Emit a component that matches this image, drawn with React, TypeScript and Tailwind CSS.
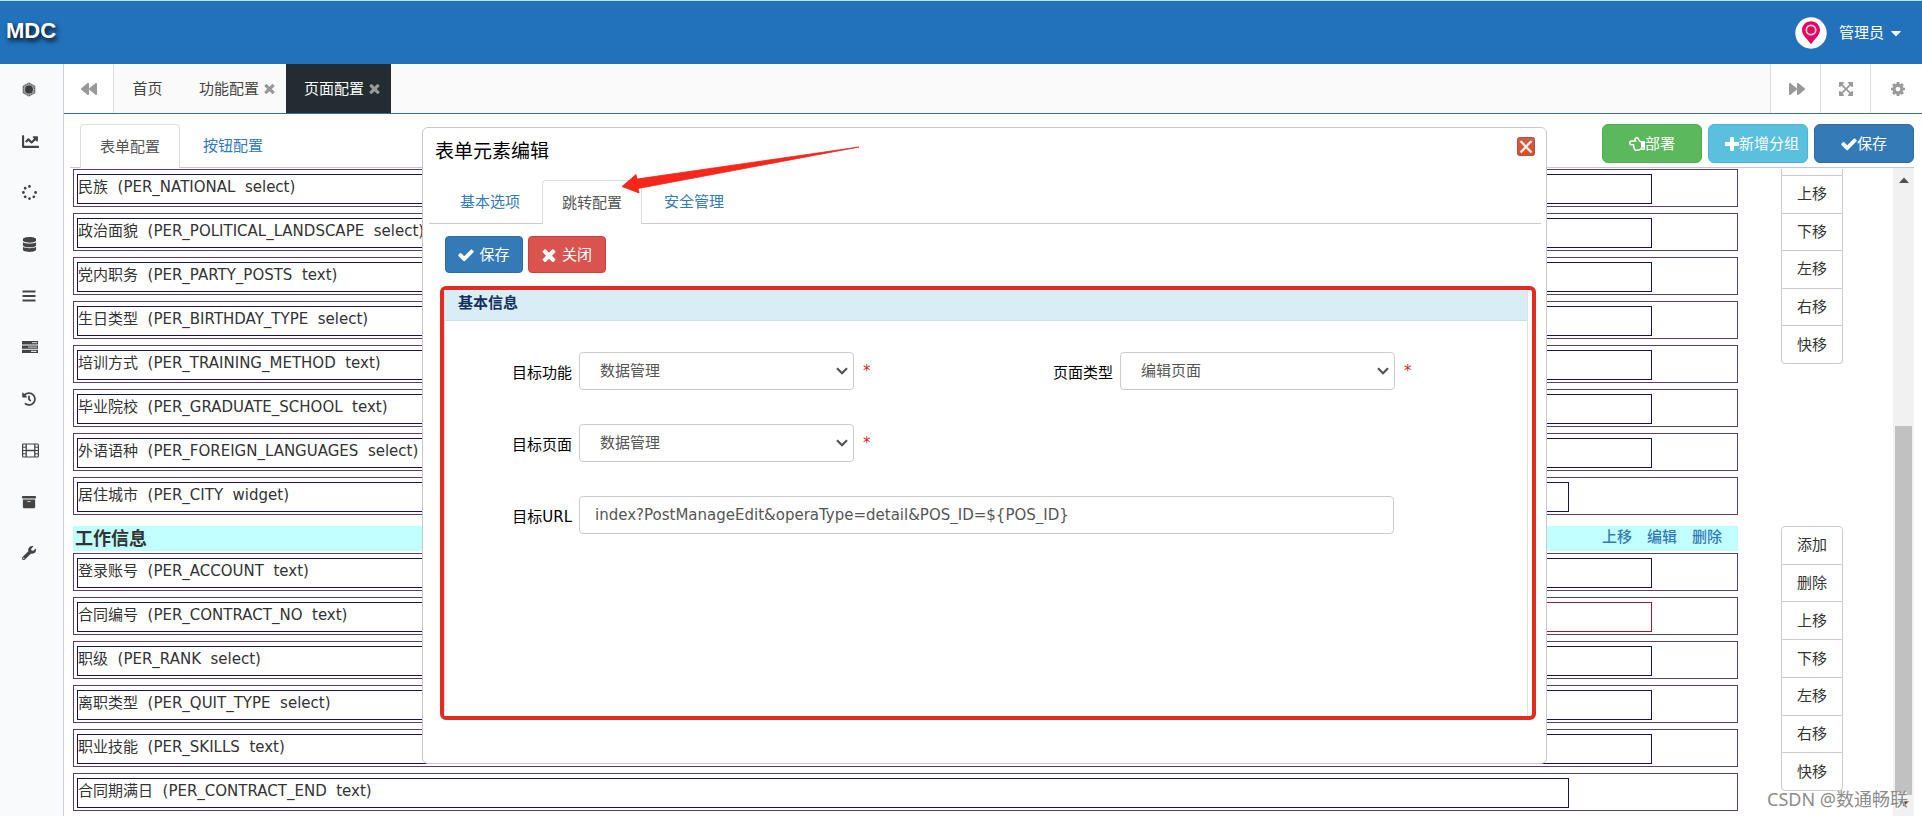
import type { ReactNode } from "react";
import {
  FaArchive,
  FaBackward,
  FaCaretDown,
  FaChartLine,
  FaDatabase,
  FaExpandArrowsAlt,
  FaForward,
  FaHistory,
  FaRegHandPointLeft,
  FaSpinner,
  FaWrench,
} from "react-icons/fa";

type IconProps = { className?: string };

function TimesIcon({ className }: IconProps) {
  return (
    <svg viewBox="250 250 1292 1292" fill="currentColor" className={className} aria-hidden="true">
      <path d="M1490 1322q0 40-28 68l-136 136q-28 28-68 28t-68-28l-294-294-294 294q-28 28-68 28t-68-28l-136-136q-28-28-28-68t28-68l294-294-294-294q-28-28-28-68t28-68l136-136q28-28 68-28t68 28l294 294 294-294q28-28 68-28t68 28l136 136q28 28 28 68t-28 68l-294 294 294 294q28 28 28 68z" />
    </svg>
  );
}

function CheckIcon({ className }: IconProps) {
  return (
    <svg viewBox="100 200 1592 1392" fill="currentColor" className={className} aria-hidden="true">
      <path d="M1671 566q0 40-28 68l-724 724-136 136q-28 28-68 28t-68-28l-136-136-362-362q-28-28-28-68t28-68l136-136q28-28 68-28t68 28l294 295 656-657q28-28 68-28t68 28l136 136q28 28 28 68z" />
    </svg>
  );
}

function PlusIcon({ className }: IconProps) {
  return (
    <svg viewBox="192 128 1408 1408" fill="currentColor" className={className} aria-hidden="true">
      <path d="M1600 736v192q0 40-28 68t-68 28h-416v416q0 40-28 68t-68 28h-192q-40 0-68-28t-28-68v-416h-416q-40 0-68-28t-28-68v-192q0-40 28-68t68-28h416v-416q0-40 28-68t68-28h192q40 0 68 28t28 68v416h416q40 0 68 28t28 68z" />
    </svg>
  );
}

function CogIcon({ className }: IconProps) {
  return (
    <svg viewBox="128 128 1536 1536" fill="currentColor" className={className} aria-hidden="true">
      <path d="M1152 896q0-106-75-181t-181-75-181 75-75 181 75 181 181 75 181-75 75-181zm512-109v222q0 12-8 23t-20 13l-185 28q-19 54-39 91 35 50 107 138 10 12 10 25t-9 23q-27 37-99 108t-94 71q-12 0-26-9l-138-108q-44 23-91 38-16 136-29 186-7 28-36 28h-222q-14 0-24.500-8.500t-11.500-21.500l-28-184q-49-16-90-37l-141 107q-10 9-25 9-14 0-25-11-126-114-165-168-7-10-7-23 0-12 8-23 15-21 51-66.500t54-70.500q-27-50-41-99l-183-27q-13-2-21-12.500t-8-23.500v-222q0-12 8-23t19-13l186-28q14-46 39-92-40-57-107-138-10-12-10-24 0-10 9-23 26-36 98.500-107.500t94.500-71.500q13 0 26 10l138 107q44-23 91-38 16-136 29-186 7-28 36-28h222q14 0 24.500 8.500t11.500 21.500l28 184q49 16 90 37l142-107q9-9 24-9 13 0 25 10 129 119 165 170 7 8 7 22 0 12-8 23-15 21-51 66.500t-54 70.500q26 50 41 98l183 28q13 2 21 12.500t8 23.500z" />
    </svg>
  );
}

function HexIcon() {
  return (
    <svg viewBox="0 0 14 15" className="h-[15px] w-[14px]" aria-hidden="true">
      <path d="M7 0.300l6.500 3.500v7.400L7 14.700 0.500 11.200V3.800z" fill="#a0a3a6" />
      <path d="M7 1.300l5.500 3.100v6.200L7 13.700 1.500 10.600V4.400z" fill="none" stroke="#5c5c5c" strokeDasharray="1.500 1" />
      <circle cx="7" cy="7.500" r="3.900" fill="#3c3c3c" />
    </svg>
  );
}

function BarsIcon() {
  return (
    <svg viewBox="0 0 14 12" className="h-3 w-[14px]" fill="currentColor" aria-hidden="true">
      <rect x="0.500" y="0.500" width="13" height="2" />
      <rect x="0.500" y="5" width="13" height="2" />
      <rect x="0.500" y="9.500" width="13" height="2" />
    </svg>
  );
}

function TasksIcon() {
  return (
    <svg viewBox="0 0 16 12" className="h-3 w-4" aria-hidden="true">
      <path d="M0 0h16v3.400H0zM0 4.400h16v3.400H0zM0 8.800h16V12H0z" fill="#444" />
      <path d="M10 1.200h5v1h-5z" fill="#ddd" />
      <path d="M6 5.400h9v1.400H6z" fill="#aaa" />
      <path d="M9 9.800h5.500v1.200H9z" fill="#ddd" />
    </svg>
  );
}

function FilmIcon() {
  return (
    <svg viewBox="0 0 17 15" className="h-[15px] w-[17px]" fill="none" stroke="#444" aria-hidden="true">
      <rect x="0.600" y="1" width="15.800" height="13" rx="1" strokeWidth="1.200" />
      <path d="M4.200 1v13M12.800 1v13M4.200 7.500h8.600" strokeWidth="1.300" />
      <path d="M0.600 4.200h3.600M0.600 7.500h3.600M0.600 10.800h3.600M12.800 4.200h3.600M12.800 7.500h3.600M12.800 10.800h3.600" strokeWidth="1" />
    </svg>
  );
}

function PinLogo() {
  return (
    <svg viewBox="0 0 32 32" className="size-8" aria-hidden="true">
      <circle cx="16" cy="16" r="15.700" fill="#fff" />
      <path d="M16 4.200c-5 0-9 4-9 8.800 0 5.200 5 8.500 9 14.200 4-5.700 9-9 9-14.200 0-4.800-4-8.800-9-8.800z" fill="#e8045e" />
      <circle cx="16" cy="13" r="4.700" fill="#e8045e" stroke="#fbd3e2" strokeWidth="1.700" />
    </svg>
  );
}

function CloseBadge() {
  return (
    <svg viewBox="0 0 18 19" className="h-[19px] w-[18px]" aria-hidden="true">
      <defs>
        <linearGradient id="closeFill" x1="0" y1="0" x2="0" y2="1">
          <stop offset="0" stopColor="#c9604c" />
          <stop offset="1" stopColor="#dd4f22" />
        </linearGradient>
      </defs>
      <rect x="0.500" y="0.500" width="17" height="18" rx="2" fill="url(#closeFill)" stroke="#b5503c" />
      <path d="M3.500 4l11 11.500M14.500 4l-11 11.500" stroke="#f3ece6" strokeWidth="2.400" />
    </svg>
  );
}

const sideItems: { label: string; icon: ReactNode }[] = [
  { label: "模块", icon: <HexIcon /> },
  { label: "统计", icon: <FaChartLine className="size-[17px]" /> },
  { label: "加载", icon: <FaSpinner className="size-[15px]" /> },
  { label: "数据", icon: <FaDatabase className="size-[15px]" /> },
  { label: "列表", icon: <BarsIcon /> },
  { label: "任务", icon: <TasksIcon /> },
  { label: "历史", icon: <FaHistory className="size-[14px]" /> },
  { label: "媒体", icon: <FilmIcon /> },
  { label: "归档", icon: <FaArchive className="size-[14px]" /> },
  { label: "工具", icon: <FaWrench className="size-[14px]" /> },
];

type Field = { label: string; code: string; kind: string; short?: boolean; invalid?: boolean };

const personalFields: Field[] = [
  { label: "民族", code: "PER_NATIONAL", kind: "select" },
  { label: "政治面貌", code: "PER_POLITICAL_LANDSCAPE", kind: "select" },
  { label: "党内职务", code: "PER_PARTY_POSTS", kind: "text" },
  { label: "生日类型", code: "PER_BIRTHDAY_TYPE", kind: "select" },
  { label: "培训方式", code: "PER_TRAINING_METHOD", kind: "text" },
  { label: "毕业院校", code: "PER_GRADUATE_SCHOOL", kind: "text" },
  { label: "外语语种", code: "PER_FOREIGN_LANGUAGES", kind: "select" },
  { label: "居住城市", code: "PER_CITY", kind: "widget", short: true },
];

const workFields: Field[] = [
  { label: "登录账号", code: "PER_ACCOUNT", kind: "text" },
  { label: "合同编号", code: "PER_CONTRACT_NO", kind: "text", invalid: true },
  { label: "职级", code: "PER_RANK", kind: "select" },
  { label: "离职类型", code: "PER_QUIT_TYPE", kind: "select" },
  { label: "职业技能", code: "PER_SKILLS", kind: "text" },
  { label: "合同期满日", code: "PER_CONTRACT_END", kind: "text", short: true },
];

function FieldRow({ field }: { field: Field }) {
  return (
    <div className="h-[38px] border border-[#5b3f68] pt-1 pl-[3px]">
      <div className={field.short ? "mr-[168px] flex" : "mr-[85px] flex"}>
        <div className="h-[30px] flex-1 overflow-hidden border border-[#17125a] leading-[25px] whitespace-pre">
          {`${field.label}  (${field.code}  ${field.kind})`}
        </div>
        {field.invalid && <div className="h-[30px] w-1/4 border border-[#8c2230]" />}
      </div>
    </div>
  );
}

function ActionStack({ items, continued }: { items: string[]; continued?: boolean }) {
  return (
    <div
      className={
        continued
          ? "flex h-[195px] w-[62px] flex-col rounded-b border border-t-0 border-[#ccc] pt-[6px]"
          : "flex h-[265px] w-[62px] flex-col rounded border border-[#ccc]"
      }
    >
      {items.map((item, i) => (
        <button
          key={item}
          type="button"
          className={
            i > 0 || continued
              ? "flex-1 border-t border-[#ccc] text-[#333]"
              : "flex-1 text-[#333]"
          }
        >
          {item}
        </button>
      ))}
    </div>
  );
}

function SelectField({ id, label, value }: { id: string; label: string; value: string }) {
  return (
    <div className="flex items-center">
      <label htmlFor={id} className="w-[134px] pt-[3px] pr-[7px] text-right text-black">
        {label}
      </label>
      <div className="relative w-[275px]">
        <select
          id={id}
          defaultValue={value}
          className="h-[38px] w-full appearance-none rounded border border-[#ccc] bg-white pl-5 text-[#555]"
        >
          <option>{value}</option>
        </select>
        <svg
          viewBox="0 0 12 8"
          className="pointer-events-none absolute top-[15px] right-[6px] h-2 w-3"
          fill="none"
          stroke="#555"
          strokeWidth="2.200"
          aria-hidden="true"
        >
          <path d="M1 1.200l5 5 5-5" />
        </svg>
      </div>
      <span className="pl-[9px] text-[#d02b2b]">*</span>
    </div>
  );
}

function EditDialog() {
  return (
    <section
      role="dialog"
      aria-label="表单元素编辑"
      className="absolute top-[13px] right-[375px] left-[358px] z-10 h-[637px] rounded-md border border-[#c6c8cc] bg-white"
    >
      <div className="flex h-[52px] items-start justify-between pt-[9px] pr-[11px] pl-3">
        <h2 className="text-[19px] leading-7 text-black">表单元素编辑</h2>
        <button type="button" aria-label="关闭窗口">
          <CloseBadge />
        </button>
      </div>
      <div className="mr-[5px] ml-[6px] flex h-11 gap-[2px] border-b border-[#ccc] pl-[11px] text-[#337ab7]">
        <button type="button" className="w-[100px]">基本选项</button>
        <button
          type="button"
          className="-mb-px w-[100px] rounded-t border border-b-0 border-[#ddd] bg-white text-[#555]"
        >
          跳转配置
        </button>
        <button type="button" className="w-[100px]">安全管理</button>
      </div>
      <div className="flex gap-[5px] pt-3 pl-[22px] text-white">
        <button
          type="button"
          className="flex h-[37px] w-[78px] items-center justify-center gap-[5px] rounded border border-[#2e6da4] bg-[#337ab7]"
        >
          <CheckIcon className="h-[14px] w-4" />
          保存
        </button>
        <button
          type="button"
          className="flex h-[37px] w-[78px] items-center justify-center gap-[6px] rounded border border-[#d43f3a] bg-[#d9534f]"
        >
          <TimesIcon className="size-[14px]" />
          关闭
        </button>
      </div>
      <div className="mt-[13px] mr-[10px] ml-[17px] h-[434px] rounded-md border-4 border-[#e32b22] pr-1">
        <div className="flex h-full flex-col border-x border-[#dde3e6]">
          <h3 className="h-[31px] border-b border-[#c5e3ea] bg-[#d9edf7] pl-[13px] leading-[27px] font-bold text-[#14305c]">
            基本信息
          </h3>
          <form className="grid grid-cols-2 gap-y-[34px] pt-[31px]">
            <SelectField id="target-func" label="目标功能" value="数据管理" />
            <SelectField id="page-type" label="页面类型" value="编辑页面" />
            <div className="col-span-2">
              <SelectField id="target-page" label="目标页面" value="数据管理" />
            </div>
            <div className="col-span-2 flex items-center pr-[133px]">
              <label htmlFor="target-url" className="w-[134px] pt-[3px] pr-[7px] text-right text-black">
                目标URL
              </label>
              <input
                id="target-url"
                type="text"
                defaultValue="index?PostManageEdit&operaType=detail&POS_ID=${POS_ID}"
                className="h-[38px] flex-1 rounded border border-[#ccc] pl-[15px] text-[#555]"
              />
            </div>
          </form>
        </div>
      </div>
      <svg
        viewBox="0 0 240 50"
        className="pointer-events-none absolute top-[17px] left-[197px] h-[50px] w-[240px]"
        fill="#f8261a"
        stroke="#e5281e"
        strokeWidth="0.800"
        aria-hidden="true"
      >
        <path d="M2 41.500L16 29.500l1 4.500L239 2 18 43.500l1 4.500z" />
      </svg>
    </section>
  );
}

export default function App() {
  return (
    <div className="flex h-screen flex-col overflow-hidden bg-white font-['DejaVu_Sans','Noto_Sans_CJK_SC',sans-serif] text-[15px] leading-5 text-[#333]">
      <header className="flex h-16 shrink-0 items-center justify-between border-t border-[#b5e2f5] bg-[#2271bb] pr-[18px] pl-[6px] text-white">
        <h1 className="pb-1 font-['Liberation_Sans',sans-serif] text-[22px] leading-7 font-bold [text-shadow:2px_3px_5px_#000]">
          MDC
        </h1>
        <button type="button" className="flex items-center">
          <PinLogo />
          <span className="pl-3">管理员</span>
          <FaCaretDown className="ml-1 size-4" />
        </button>
      </header>

      <div className="flex min-h-0 flex-1">
        <nav className="w-16 shrink-0 border-r border-[#ccd0dc] bg-[#f9fafc] text-[#444]">
          <ul className="flex h-[515px] flex-col">
            {sideItems.map((item) => (
              <li key={item.label} className="flex flex-1 items-center pl-[22px]">
                <a href="#" aria-label={item.label}>
                  {item.icon}
                </a>
              </li>
            ))}
          </ul>
        </nav>

        <div className="flex min-w-0 flex-1 flex-col">
          <div className="flex h-[50px] shrink-0 border-b border-[#386f8c] bg-[#fafafa] text-[#999]">
            <button type="button" aria-label="向左" className="flex w-[50px] items-center justify-center border-r border-[#ddd] bg-white">
              <FaBackward className="size-4" />
            </button>
            <button type="button" className="w-[67px] text-[#444]">首页</button>
            <div className="flex w-[105px] items-center justify-center gap-[5px] pl-[7px]">
              <button type="button" className="text-[#444]">功能配置</button>
              <button type="button" aria-label="关闭功能配置"><TimesIcon className="size-[11px]" /></button>
            </div>
            <div className="flex w-[105px] items-center justify-center gap-[5px] bg-[#232d31] pl-[7px]">
              <button type="button" className="text-white">页面配置</button>
              <button type="button" aria-label="关闭页面配置"><TimesIcon className="size-[11px]" /></button>
            </div>
            <div className="ml-auto flex bg-white">
              <button type="button" aria-label="向右" className="flex w-[50px] items-center justify-center border-l border-[#ddd] pl-[2px]">
                <FaForward className="size-4" />
              </button>
              <button type="button" aria-label="全屏" className="flex w-[50px] items-center justify-center border-l border-[#ddd]">
                <FaExpandArrowsAlt className="size-4" />
              </button>
              <button type="button" aria-label="设置" className="flex w-[52px] items-center justify-center border-l border-[#ddd] pl-[2px]">
                <CogIcon className="size-[14px]" />
              </button>
            </div>
          </div>

          <div className="relative flex min-h-0 flex-1 flex-col pr-2 pl-[6px]">
            <div className="flex h-[54px] shrink-0 justify-between border-b border-[#c9c5cf] pt-[10px] pl-[10px]">
              <div className="flex text-[#337ab7]">
                <button
                  type="button"
                  className="-mb-px w-[100px] rounded-t border border-b-0 border-[#ddd] bg-white text-[#555]"
                >
                  表单配置
                </button>
                <button type="button" className="ml-[3px] w-[100px]">按钮配置</button>
              </div>
              <div className="flex h-[39px] gap-[6px] text-white">
                <button type="button" className="flex w-[100px] items-center justify-center rounded-md border border-[#4cae4c] bg-[#5cb85c]">
                  <FaRegHandPointLeft className="size-4" />
                  部署
                </button>
                <button type="button" className="flex w-[100px] items-center rounded-md border border-[#46b8da] bg-[#5bc0de] pl-4">
                  <PlusIcon className="size-[14px] shrink-0" />
                  新增分组
                </button>
                <button type="button" className="flex w-[100px] items-center justify-center rounded-md border border-[#2e6da4] bg-[#337ab7]">
                  <CheckIcon className="h-[14px] w-4" />
                  保存
                </button>
              </div>
            </div>

            <div className="flex min-h-0 flex-1 overflow-hidden">
              <div className="min-w-0 flex-1 pr-[50px] pl-[3px]">
                <div className="flex gap-[43px] pt-px">
                  <div className="flex min-w-0 flex-1 flex-col gap-[6px]">
                    {personalFields.map((f) => (
                      <FieldRow key={f.code} field={f} />
                    ))}
                  </div>
                  <ActionStack continued items={["上移", "下移", "左移", "右移", "快移"]} />
                </div>
                <div className="mt-[11px] flex gap-[43px]">
                  <div className="min-w-0 flex-1">
                    <div className="flex h-[25px] justify-between bg-[#c2ffff] pr-4 pl-[2px]">
                      <h3 className="text-[18px] leading-[26px] font-bold">工作信息</h3>
                      <div className="flex gap-[15px] leading-[22px] font-medium text-[#337ab7]">
                        <a href="#">上移</a>
                        <a href="#">编辑</a>
                        <a href="#">删除</a>
                      </div>
                    </div>
                    <div className="flex flex-col gap-[6px] pt-[2px]">
                      {workFields.map((f) => (
                        <FieldRow key={f.code} field={f} />
                      ))}
                    </div>
                  </div>
                  <ActionStack items={["添加", "删除", "上移", "下移", "左移", "右移", "快移"]} />
                </div>
              </div>
              <div className="flex w-[21px] shrink-0 flex-col items-center bg-[#f1f1f1]" aria-hidden="true">
                <svg viewBox="0 0 10 6" className="mt-[9px] h-[6px] w-[10px]" fill="#505050">
                  <path d="M0 6l5-5.500L10 6z" />
                </svg>
                <div className="mt-auto h-[57%] w-[17px] bg-[#c1c1c1]" />
                <svg viewBox="0 0 10 6" className="mt-[6px] mb-[9px] h-[6px] w-[10px]" fill="#505050">
                  <path d="M0 0l5 5.500L10 0z" />
                </svg>
              </div>
            </div>

            <EditDialog />
            <p className="pointer-events-none absolute right-[14px] bottom-[5px] z-20 font-['Noto_Sans','Noto_Sans_CJK_SC',sans-serif] text-[18px] leading-6 text-[#8c8c8c] [text-shadow:1px_1px_0_#fff]">
              CSDN @数通畅联
            </p>
          </div>
        </div>
      </div>
    </div>
  );
}
